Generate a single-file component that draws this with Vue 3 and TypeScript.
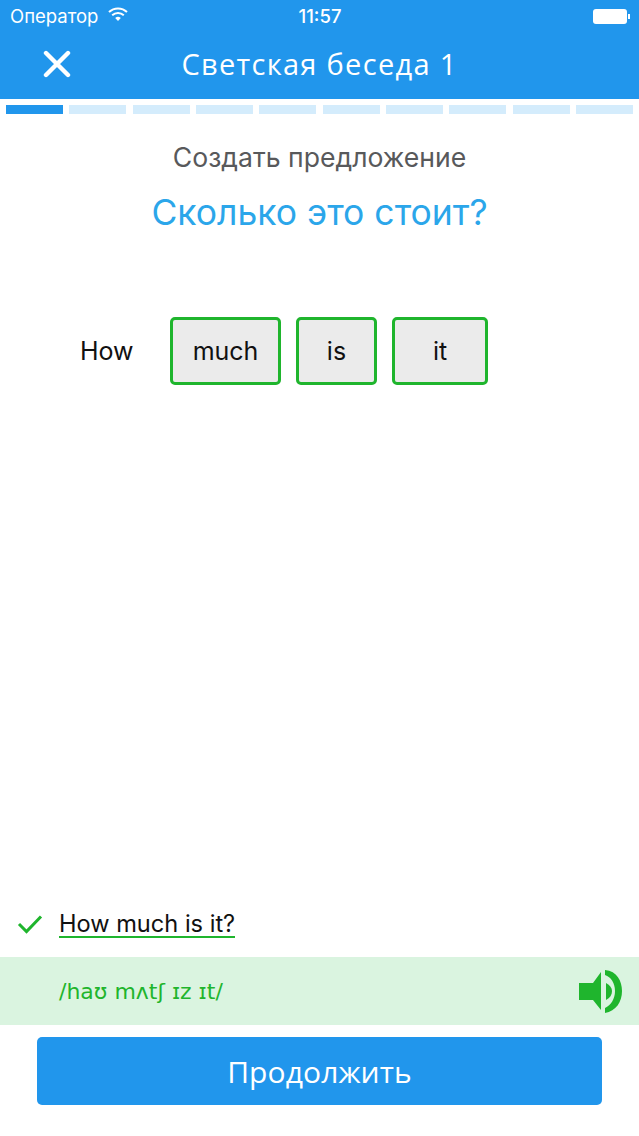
<script setup lang="ts">
const segments = Array.from({ length: 10 }, (_, i) => i === 0)
const words = [
  { text: 'much', width: 111 },
  { text: 'is', width: 81 },
  { text: 'it', width: 96 },
]
</script>

<template>
  <div class="screen">
    <header class="top">
      <div class="status">
        <div class="carrier">
          <span>Оператор</span>
          <svg class="wifi" width="20" height="14" viewBox="0 0 20 14">
            <path d="M1 5a13 13 0 0 1 18 0" fill="none" stroke="#fff" stroke-width="2" />
            <path d="M4.2 8.200a8.500 8.500 0 0 1 11.600 0" fill="none" stroke="#fff" stroke-width="2" />
            <path d="M7.200 11a4 4 0 0 1 5.600 0L10 14z" fill="#fff" />
          </svg>
        </div>
        <span class="time">11:57</span>
        <div class="battery"><i></i><b></b></div>
      </div>
      <div class="titlebar">
        <svg class="close" width="28" height="28" viewBox="0 0 28 28">
          <path d="M3 3l22 22M25 3L3 25" stroke="#fff" stroke-width="4.400" stroke-linecap="round" />
        </svg>
        <h1>Светская беседа 1</h1>
      </div>
    </header>

    <div class="progress">
      <span v-for="(on, i) in segments" :key="i" class="seg" :class="{ on }"></span>
    </div>

    <main class="body">
      <p class="task">Создать предложение</p>
      <p class="phrase">Сколько это стоит?</p>
      <div class="words">
        <span class="first">How</span>
        <span v-for="w in words" :key="w.text" class="word" :style="{ width: w.width + 'px' }">{{ w.text }}</span>
      </div>
    </main>

    <div class="answer">
      <svg class="check" width="26" height="20" viewBox="0 0 26 20">
        <path d="M2 10l7.500 7.500L24 2.500" fill="none" stroke="#1fb52d" stroke-width="3" />
      </svg>
      <span class="sentence">How much is it?</span>
    </div>
    <div class="ipa">
      <span>/haʊ mʌtʃ ɪz ɪt/</span>
      <svg class="sound" width="46" height="46" viewBox="0 0 46 46">
        <path d="M2 15h14L24 4v38L16 32H2z" fill="#1fb52d" />
        <path d="M29 15C33 17 35 20 35 23C35 27 33 30 29 32z" fill="#1fb52d" />
        <path d="M28 2C40 3 45 13 45 23C45 34 39 43 28 45L28 40C34 37 38 31 38 23C38 15 34 9 28 7z" fill="#1fb52d" />
      </svg>
    </div>
    <div class="footer">
      <button class="next">Продолжить</button>
    </div>
  </div>
</template>

<style scoped>
.screen { width: 639px; height: 1136px; display: flex; flex-direction: column; background: #fff; font-family: Inter, "Noto Sans", sans-serif; overflow: hidden; }
.top { height: 99px; background: #2196ec; color: #fff; flex: none; }
.status { height: 33px; display: grid; grid-template-columns: 1fr auto 1fr; align-items: center; padding: 0 9px 2px 10px; box-sizing: border-box; font-size: 18.500px; }
.carrier { display: flex; align-items: center; gap: 10px; font-weight: 400; }
.wifi { margin-top: -3px; }
.time { font-weight: 500; }
.battery { justify-self: end; display: flex; align-items: center; gap: 1px; margin-top: 2px; }
.battery i { width: 34px; height: 15px; background: #fff; border-radius: 3px; }
.battery b { width: 2px; height: 5px; background: #fff; }
.titlebar { height: 66px; display: flex; align-items: center; justify-content: center; position: relative; padding-bottom: 6px; box-sizing: border-box; }
.close { position: absolute; left: 43px; top: 17px; }
h1 { margin: 0; font-size: 29px; font-weight: 400; letter-spacing: 1.300px; font-family: "Open Sans", sans-serif; }
.progress { display: flex; gap: 6.300px; padding: 6px 6px 0; flex: none; }
.seg { flex: 1; height: 9px; background: #d4ecfc; }
.seg.on { background: #2196ec; }
.body { flex: 1; display: flex; flex-direction: column; align-items: center; }
.task { margin: 27px 0 0; font-size: 26.600px; line-height: 32px; color: #58595b; }
.phrase { margin: 18px 0 0; font-size: 35.500px; line-height: 44px; color: #2ba6ea; }
.words { align-self: flex-start; display: flex; align-items: center; gap: 15px; margin: 82px 0 0 80px; font-size: 25px; color: #111; }
.first { width: 75px; }
.word { height: 68px; box-sizing: border-box; border: 3px solid #1fb52d; border-radius: 5px; background: #ebebeb; display: flex; align-items: center; justify-content: center; }
.answer { display: flex; align-items: center; height: 58px; flex: none; padding-left: 17px; margin-bottom: 4px; }
.check { margin-right: 16px; }
.sentence { font-size: 23.600px; line-height: 25px; color: #111; border-bottom: 2px solid #1fb52d; }
.ipa { height: 68px; flex: none; background: #daf4e0; display: flex; align-items: center; justify-content: space-between; padding: 0 16px 0 59px; color: #1fb52d; font-size: 22px; font-family: "DejaVu Sans", sans-serif; }
.footer { height: 111px; flex: none; padding: 12px 37px 0; box-sizing: border-box; }
.next { width: 100%; height: 68px; border: 0; border-radius: 5px; background: #2196ec; color: #fff; font-size: 30px; font-family: "Open Sans", sans-serif; letter-spacing: 0.100px; }
</style>

<style>
html, body { margin: 0; padding: 0; }
</style>
